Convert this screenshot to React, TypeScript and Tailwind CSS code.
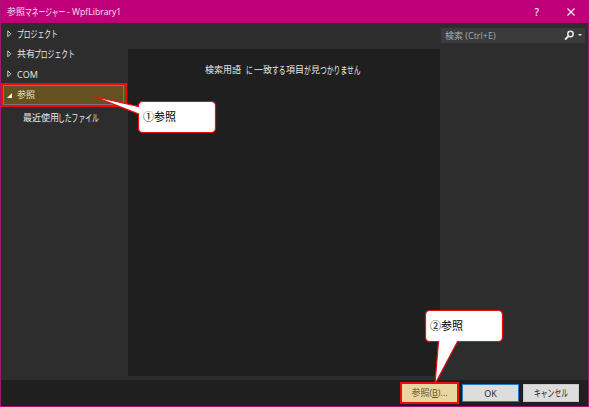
import type { ReactNode } from "react";

const arrow = "M0.8 0.8 L3.8 3.8 L0.8 6.8 Z";

function Kana({ children, className }: { children: ReactNode; className: string }) {
  return (
    <span className={`flex-none text-[10px] ${className}`}>
      <span className="block w-max origin-left scale-x-[0.68]">{children}</span>
    </span>
  );
}

function TreeItem({ children }: { children: ReactNode }) {
  return (
    <div className="flex h-5 items-center pl-1.5">
      <svg width="5" height="8" viewBox="0 0 5 8" className="mr-[5px] flex-none">
        <path d={arrow} fill="none" stroke="#dcdcdc" strokeWidth="0.9" />
      </svg>
      {children}
    </div>
  );
}

export default function App() {
  return (
    <div className="relative flex h-[407px] w-[589px] flex-col overflow-hidden whitespace-nowrap border border-t-0 border-[#a41472] bg-[#2d2d30] font-['Open_Sans','Noto_Sans_CJK_JP',sans-serif] text-[9px] leading-[14px] text-[#e8e8e8]">
      <header className="flex h-[23px] flex-none items-center bg-[#c0007a] pl-1.5 text-[#f5e4ee]">
        <span>参照</span>
        <Kana className="w-[40px]">マネージャー</Kana>
        <span className="ml-0.5 origin-left scale-x-[0.96]">- WpfLibrary1</span>
        <span className="ml-auto mr-[28px] text-[10px] font-semibold">?</span>
        <svg width="8" height="8" viewBox="0 0 8 8" className="mr-[13px]">
          <path d="M0.5 0.5 L7.5 7.5 M7.5 0.5 L0.5 7.5" stroke="#fff" strokeWidth="1.1" />
        </svg>
      </header>

      <main className="flex h-[357px] flex-none bg-[#2d2d2d]">
        <nav className="w-[127px] flex-none pt-px">
          <TreeItem>
            <Kana className="w-10">プロジェクト</Kana>
          </TreeItem>
          <TreeItem>
            <span className="w-[17px]">共有</span>
            <Kana className="w-10">プロジェクト</Kana>
          </TreeItem>
          <TreeItem>
            <span className="pt-px">COM</span>
          </TreeItem>
          <div className="-mt-px h-6 w-[126px] border-2 border-[#ef0b0b] bg-[#65501f]">
            <div className="flex h-5 w-[121px] items-center border border-[#857078] pl-[3px] text-[#f5e8bd]">
              <svg width="5" height="5" viewBox="0 0 5 5" className="mr-[5px]">
                <path d="M5 0 V5 H0 Z" fill="#fff3cd" />
              </svg>
              参照
            </div>
          </div>
          <div className="flex h-[21px] items-center pl-[22px]">
            <span className="w-[35px]">最近使用</span>
            <Kana className="w-[38px]">したファイル</Kana>
          </div>
        </nav>
        <section className="mt-[26px] flex h-[327px] w-[312px] flex-none bg-[#1f1f1f] pl-[77px] pt-[14px]">
          <span>検索用語</span>
          <Kana className="ml-[5px] w-[8px]">に</Kana>
          <span>一致</span>
          <Kana className="w-[14px]">する</Kana>
          <span>項目</span>
          <Kana className="w-[7px]">が</Kana>
          <span>見</span>
          <Kana className="w-12">つかりません</Kana>
        </section>
        <aside className="flex-1 pl-px pt-[5px]">
          <div className="flex h-[15px] w-[144px] items-center bg-[#3b3b3b] pl-1 text-[#aaa]">
            検索 (Ctrl+E)
            <svg width="19" height="11" viewBox="0 0 19 11" className="ml-auto mr-[2px]">
              <circle cx="6.5" cy="4" r="2.7" fill="none" stroke="#e8e8e8" strokeWidth="1.5" />
              <path d="M4.6 6 L1 9.6" stroke="#e8e8e8" strokeWidth="2" />
              <path d="M14 4 H18 L16 6 Z" fill="#e8e8e8" />
            </svg>
          </div>
        </aside>
      </main>

      <footer className="flex min-h-0 flex-1 items-start bg-[#1f1f1f] pl-[399px] pt-0.5 text-[#222]">
        <button className="flex h-[22px] w-[59px] flex-none items-center justify-center border-2 border-[#ef0b0b] bg-[#e8d7a0] pb-px text-[#65501f]">
          参照(<span className="underline">B</span>)...
        </button>
        <button className="ml-[3px] mt-0.5 h-[18px] w-[57px] flex-none border border-[#267ac8] bg-[#ddd] leading-[15px]">OK</button>
        <button className="ml-1 mt-0.5 flex h-[18px] w-14 flex-none items-center border border-[#c9c9c9] bg-[#ddd] pl-[10px]">
          <Kana className="w-9">キャンセル</Kana>
        </button>
      </footer>

      <svg width="589" height="407" viewBox="0 0 589 407" className="pointer-events-none absolute -left-px top-0">
        <g fill="#fff" stroke="#ef0b0b" strokeWidth="1.2">
          <path d="M143 101.5 H211 Q215.5 101.5 215.5 106 V128 Q215.5 132.5 211 132.5 H143 Q138.5 132.5 138.5 128 V114 L94 96.5 L138.5 106.5 Q138.5 101.5 143 101.5 Z" />
          <path d="M430 310.5 H498 Q502.5 310.5 502.5 315 V337 Q502.5 341.5 498 341.5 H457.5 L435 384 L438.5 341.5 H430 Q425.5 341.5 425.5 337 V315 Q425.5 310.5 430 310.5 Z" />
        </g>
      </svg>
      <div className="absolute left-[142px] top-[108px] font-['Noto_Sans_CJK_JP',sans-serif] text-[11px] leading-4 text-black">①参照</div>
      <div className="absolute left-[429px] top-[317px] font-['Noto_Sans_CJK_JP',sans-serif] text-[11px] leading-4 text-black">②参照</div>
    </div>
  );
}
